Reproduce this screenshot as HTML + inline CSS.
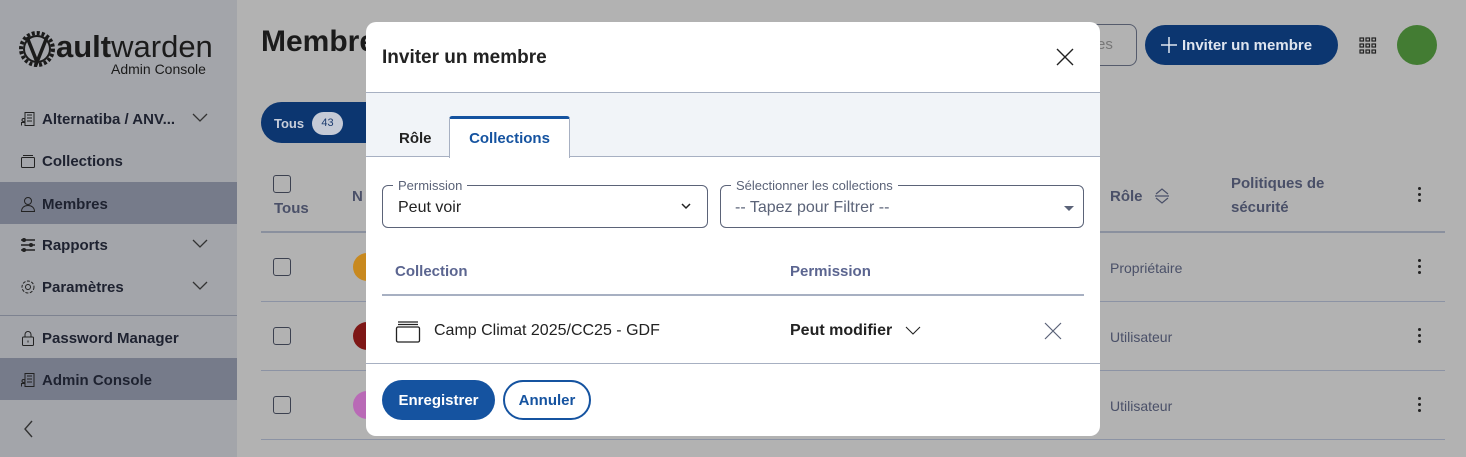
<!DOCTYPE html>
<html><head><meta charset="utf-8"><style>
*{box-sizing:border-box;margin:0;padding:0}
body{width:1466px;height:457px;overflow:hidden;font-family:"Liberation Sans",sans-serif;background:#b2b2b2;position:relative;color:#1b1b1b}
.abs{position:absolute}
#side{left:0;top:0;width:237px;height:457px;background:#a3a5aa}
.nav{position:absolute;left:0;width:237px;height:42px;display:flex;align-items:center;padding-left:20px;padding-top:2px;font-weight:bold;font-size:15px;color:#1e2230}
.nav svg{margin-right:6px}
.sel{background:#767b8a}
.chev{position:absolute;right:22px;top:14px}
.hl{position:absolute;left:261px;width:1184px;height:2px;background:#8a909e}
.hl1{height:1px;background:#8c93a4}
.cb{position:absolute;left:273px;width:18px;height:18px;border:1.5px solid #3c4150;border-radius:3px}
.dots{position:absolute;left:1418px;width:4px}
.dots i{display:block;width:3px;height:3px;background:#222;border-radius:50%;margin:0 0 3px}
.role{position:absolute;left:1110px;font-size:14px;color:#4a5068}
#modal{left:366px;top:22px;width:734px;height:414px;background:#fff;border-radius:10px;overflow:hidden}
</style></head><body>
<div id="side" class="abs">
  <svg class="abs" style="left:18px;top:28px" width="40" height="42" viewBox="0 0 40 42"><circle cx="19" cy="21" r="16" fill="none" stroke="#1b1b1b" stroke-width="4" stroke-dasharray="3 2"/><circle cx="19" cy="21" r="13" fill="none" stroke="#1b1b1b" stroke-width="2"/><path d="M9 9 L19 34 L29 9" fill="none" stroke="#1b1b1b" stroke-width="3.5"/></svg>
  <div class="abs" style="left:56px;top:29px;font-size:31px;color:#1b1b1b"><b>ault</b>warden</div>
  <div class="abs" style="left:111px;top:61px;font-size:14px;color:#1b1b1b">Admin Console</div>
  <div class="nav" style="top:97px"><svg width="16" height="16" viewBox="0 0 16 16" fill="none" stroke="#222"><rect x="5" y="1.5" width="9" height="13"/><path d="M7 4h5M7 7h5M7 10h5M1.5 14.5v-3h4"/><circle cx="3.5" cy="9" r="1.5"/></svg>Alternatiba / ANV...<svg class="chev" width="18" height="12" viewBox="0 0 18 12"><path d="M2 3l7 7 7-7" fill="none" stroke="#333" stroke-width="1.3"/></svg></div>
  <div class="nav" style="top:139px"><svg width="16" height="16" viewBox="0 0 16 16" fill="none" stroke="#222"><rect x="1.5" y="4.5" width="13" height="10" rx="1"/><path d="M3 2.5h10"/></svg>Collections</div>
  <div class="nav sel" style="top:182px"><svg width="16" height="16" viewBox="0 0 16 16" fill="none" stroke="#222"><circle cx="8" cy="5" r="3.5"/><path d="M1.5 15.5c0-4 3-6 6.5-6s6.5 2 6.5 6z"/></svg>Membres</div>
  <div class="nav" style="top:223px"><svg width="16" height="16" viewBox="0 0 16 16" fill="none" stroke="#222" stroke-width="1.5"><path d="M1 3h14M1 8h14M1 13h14"/><circle cx="4" cy="3" r="1.3" fill="#222"/><circle cx="11" cy="8" r="1.3" fill="#222"/><circle cx="4" cy="13" r="1.3" fill="#222"/></svg>Rapports<svg class="chev" width="18" height="12" viewBox="0 0 18 12"><path d="M2 3l7 7 7-7" fill="none" stroke="#333" stroke-width="1.3"/></svg></div>
  <div class="nav" style="top:265px"><svg width="16" height="16" viewBox="0 0 16 16" fill="none" stroke="#222"><circle cx="8" cy="8" r="2.5"/><circle cx="8" cy="8" r="6" stroke-dasharray="3 1.5"/></svg>Paramètres<svg class="chev" width="18" height="12" viewBox="0 0 18 12"><path d="M2 3l7 7 7-7" fill="none" stroke="#333" stroke-width="1.3"/></svg></div>
  <div class="abs" style="left:0;top:315px;width:237px;height:1px;background:#7d8290"></div>
  <div class="nav" style="top:316px"><svg width="16" height="16" viewBox="0 0 16 16" fill="none" stroke="#222"><rect x="2.5" y="7" width="11" height="8.5" rx="1"/><path d="M5 7V4.5a3 3 0 016 0V7"/><path d="M8 10.5v2"/></svg>Password Manager</div>
  <div class="nav sel" style="top:358px"><svg width="16" height="16" viewBox="0 0 16 16" fill="none" stroke="#222"><rect x="5" y="1.5" width="9" height="13"/><path d="M7 4h5M7 7h5M7 10h5M1.5 14.5v-3h4"/><circle cx="3.5" cy="9" r="1.5"/></svg>Admin Console</div>
  <svg class="abs" style="left:22px;top:419px" width="12" height="20" viewBox="0 0 12 20"><path d="M10 2L3 10l7 8" fill="none" stroke="#333" stroke-width="1.4"/></svg>
</div>

<div class="abs" style="left:261px;top:25px;font-size:30px;font-weight:bold;color:#1b1b1b">Membres</div>
<div class="abs" style="left:261px;top:102px;width:110px;height:41px;background:#0c3670;border-radius:21px 0 0 21px"></div>
<div class="abs" style="left:274px;top:116px;font-size:13px;font-weight:bold;color:#c9cfdb">Tous</div>
<div class="abs" style="left:312px;top:112px;width:31px;height:23px;border-radius:12px;background:#c5cad6;font-size:11px;text-align:center;line-height:23px;color:#1c3a6e">43</div>
<div class="abs" style="left:1080px;top:24px;width:57px;height:42px;border:1px solid #555b6c;border-radius:8px;font-size:15px;color:#777;line-height:40px;padding-left:16px">es</div>
<div class="abs" style="left:1145px;top:25px;width:193px;height:40px;background:#0c3670;border-radius:20px;color:#dfe5ef;font-weight:bold;font-size:15px;line-height:41px;padding-left:37px">Inviter un membre</div>
<svg class="abs" style="left:1160px;top:36px" width="18" height="18"><path d="M9 1v16M1 9h16" stroke="#dfe5ef" stroke-width="1.5"/></svg>
<svg class="abs" style="left:1359px;top:37px" width="18" height="17" viewBox="0 0 18 17" fill="none" stroke="#222" stroke-width="1.2"><rect x="1" y="1" width="3.5" height="3"/><rect x="7" y="1" width="3.5" height="3"/><rect x="13" y="1" width="3.5" height="3"/><rect x="1" y="7" width="3.5" height="3"/><rect x="7" y="7" width="3.5" height="3"/><rect x="13" y="7" width="3.5" height="3"/><rect x="1" y="13" width="3.5" height="3"/><rect x="7" y="13" width="3.5" height="3"/><rect x="13" y="13" width="3.5" height="3"/></svg>
<div class="abs" style="left:1397px;top:25px;width:40px;height:40px;border-radius:50%;background:#437c33"></div>

<div class="cb" style="top:175px"></div>
<div class="abs" style="left:274px;top:200px;font-size:15px;font-weight:bold;color:#4a5068">Tous</div>
<div class="abs" style="left:352px;top:188px;font-size:15px;font-weight:bold;color:#4a5068">N</div>
<div class="abs" style="left:1110px;top:188px;font-size:15px;font-weight:bold;color:#4a5068">Rôle</div>
<svg class="abs" style="left:1154px;top:187px" width="16" height="18" viewBox="0 0 16 18" fill="none" stroke="#4a5068" stroke-width="1.2"><path d="M2 7l6-5 6 5M2 11l6 5 6-5M1 9h14"/></svg>
<div class="abs" style="left:1231px;top:172px;font-size:15px;font-weight:bold;color:#4a5068;line-height:24px">Politiques de<br>sécurité</div>
<div class="dots" style="top:187px"><i></i><i></i><i></i></div>
<div class="hl" style="top:231px"></div>
<div class="cb" style="top:258px"></div><div class="abs" style="left:353px;top:253px;width:20px;height:28px;border-radius:14px 0 0 14px;background:#c8891f"></div>
<div class="role" style="top:260px">Propriétaire</div><div class="dots" style="top:259px"><i></i><i></i><i></i></div>
<div class="hl hl1" style="top:301px"></div>
<div class="cb" style="top:327px"></div><div class="abs" style="left:353px;top:322px;width:20px;height:28px;border-radius:14px 0 0 14px;background:#7e1716"></div>
<div class="role" style="top:329px">Utilisateur</div><div class="dots" style="top:328px"><i></i><i></i><i></i></div>
<div class="hl hl1" style="top:370px"></div>
<div class="cb" style="top:396px"></div><div class="abs" style="left:353px;top:391px;width:20px;height:28px;border-radius:14px 0 0 14px;background:#b96ab6"></div>
<div class="role" style="top:398px">Utilisateur</div><div class="dots" style="top:397px"><i></i><i></i><i></i></div>
<div class="hl hl1" style="top:439px"></div>

<div id="modal" class="abs">
  <div class="abs" style="left:16px;top:25px;font-size:19px;font-weight:bold;color:#222">Inviter un membre</div>
  <svg class="abs" style="left:690px;top:26px" width="18" height="18"><path d="M1 1l16 16M17 1L1 17" stroke="#222" stroke-width="1.4"/></svg>
  <div class="abs" style="left:0;top:70px;width:734px;height:65px;background:#f1f4f8;border-top:1px solid #a7b0c2;border-bottom:1px solid #a7b0c2"></div>
  <div class="abs" style="left:33px;top:108px;font-size:15px;font-weight:bold;color:#222">Rôle</div>
  <div class="abs" style="left:83px;top:94px;width:121px;height:42px;background:#fff;border:1px solid #a7b0c2;border-bottom:none;border-top:3px solid #1553a0;border-radius:3px 3px 0 0;font-size:15px;font-weight:bold;color:#1553a0;text-align:center;line-height:40px">Collections</div>
  <div class="abs" style="left:16px;top:163px;width:326px;height:43px;border:1px solid #5b6378;border-radius:6px"></div>
  <div class="abs" style="left:27px;top:156px;background:#fff;padding:0 5px;font-size:13px;color:#5b6378">Permission</div>
  <div class="abs" style="left:32px;top:177px;font-size:16px;color:#222">Peut voir</div>
  <svg class="abs" style="left:314px;top:180px" width="12" height="8"><path d="M2 2l4 4 4-4" fill="none" stroke="#222" stroke-width="1.5"/></svg>
  <div class="abs" style="left:354px;top:163px;width:364px;height:43px;border:1px solid #5b6378;border-radius:6px"></div>
  <div class="abs" style="left:365px;top:156px;background:#fff;padding:0 5px;font-size:13px;color:#5b6378">Sélectionner les collections</div>
  <div class="abs" style="left:369px;top:177px;font-size:16px;color:#5b6378">-- Tapez pour Filtrer --</div>
  <svg class="abs" style="left:697px;top:183px" width="12" height="7"><path d="M1 1h10L6 6z" fill="#5b6378"/></svg>
  <div class="abs" style="left:29px;top:241px;font-size:15px;font-weight:bold;color:#5b6590">Collection</div>
  <div class="abs" style="left:424px;top:241px;font-size:15px;font-weight:bold;color:#5b6590">Permission</div>
  <div class="abs" style="left:16px;top:272px;width:702px;height:2px;background:#a7b0c2"></div>
  <svg class="abs" style="left:29px;top:298px" width="26" height="24" viewBox="0 0 26 24" fill="none" stroke="#222" stroke-width="1.3"><rect x="1.5" y="7" width="23" height="15" rx="1.5"/><path d="M3 2h20M3 4.5h20"/></svg>
  <div class="abs" style="left:68px;top:300px;font-size:16px;color:#222">Camp Climat 2025/CC25 - GDF</div>
  <div class="abs" style="left:424px;top:300px;font-size:16px;font-weight:bold;color:#222">Peut modifier</div>
  <svg class="abs" style="left:539px;top:304px" width="16" height="10"><path d="M1 1l7 7 7-7" fill="none" stroke="#222" stroke-width="1.1"/></svg>
  <svg class="abs" style="left:678px;top:300px" width="18" height="18"><path d="M1 1l16 16M17 1L1 17" stroke="#5b6378" stroke-width="1.2"/></svg>
  <div class="abs" style="left:0;top:341px;width:734px;height:1px;background:#a7b0c2"></div>
  <div class="abs" style="left:16px;top:358px;width:113px;height:40px;background:#1553a0;border-radius:20px;color:#fff;font-weight:bold;font-size:15px;text-align:center;line-height:42px">Enregistrer</div>
  <div class="abs" style="left:137px;top:358px;width:88px;height:40px;border:2px solid #1553a0;border-radius:20px;color:#1553a0;font-weight:bold;font-size:15px;text-align:center;line-height:38px">Annuler</div>
</div>
</body></html>
